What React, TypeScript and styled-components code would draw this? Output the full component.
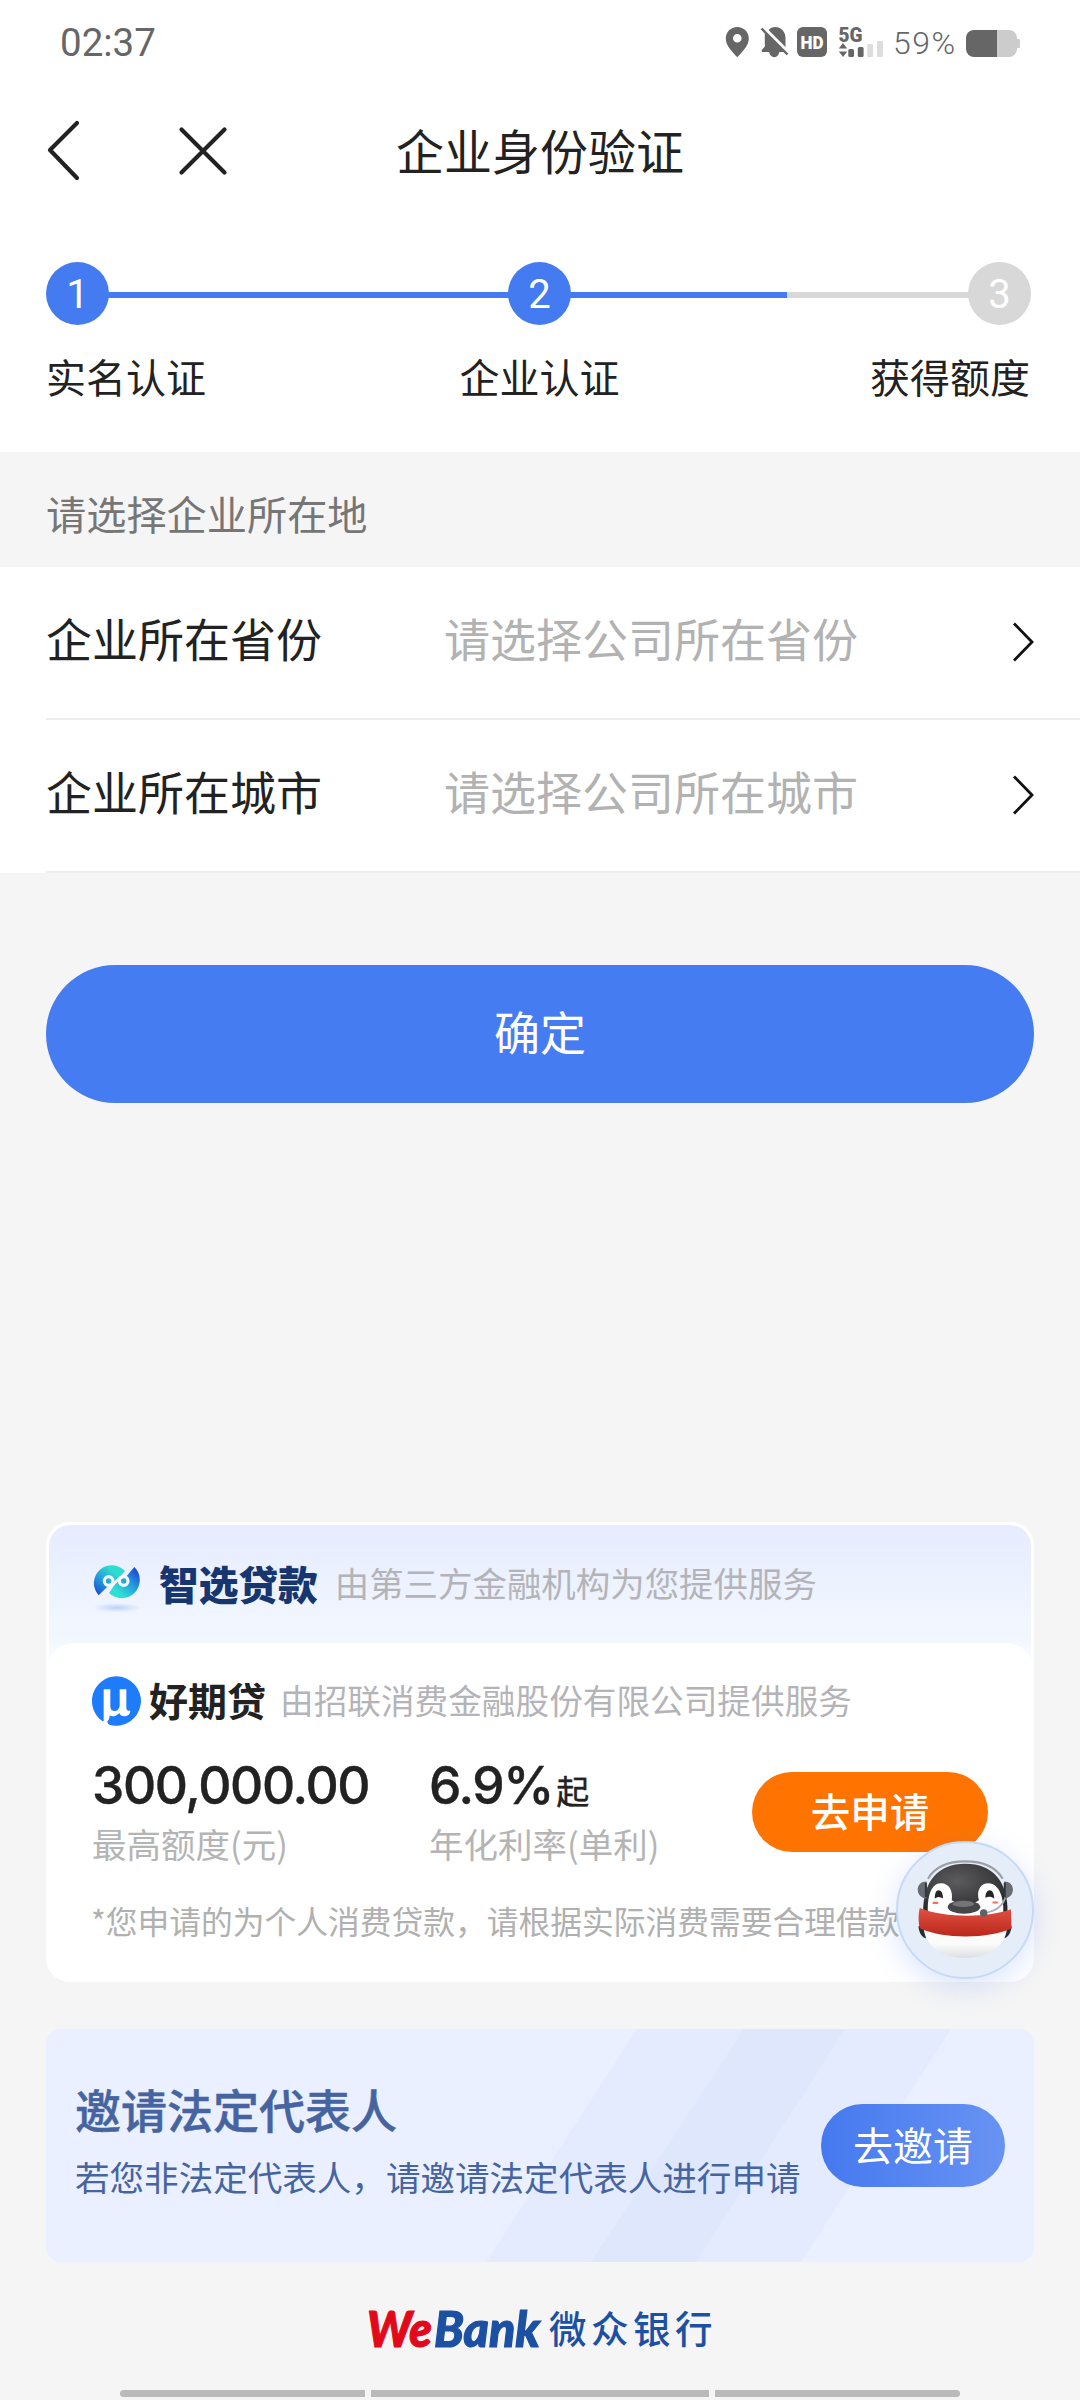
import React from 'react';
import styled, { createGlobalStyle, css } from 'styled-components';

const GlobalStyle = createGlobalStyle`
  * {
    box-sizing: border-box;
  }
  body {
    margin: 0;
    background: #f5f5f5;
    color: #222222;
    font-family: Roboto, 'Noto Sans CJK SC', sans-serif;
  }
  button {
    border: none;
    padding: 0;
    font-family: inherit;
    color: inherit;
    background: none;
  }
  svg {
    display: block;
    flex: none;
  }
`;

interface IStep {
  no: number;
  label: string;
  done: boolean;
}

interface IFieldProps {
  label: string;
  placeholder: string;
}

const steps: IStep[] = [
  { no: 1, label: '实名认证', done: true },
  { no: 2, label: '企业认证', done: true },
  { no: 3, label: '获得额度', done: false },
];

const fields: IFieldProps[] = [
  { label: '企业所在省份', placeholder: '请选择公司所在省份' },
  { label: '企业所在城市', placeholder: '请选择公司所在城市' },
];

const StatusIcons = () => (
  <svg width="162" height="66" viewBox="724 10 162 66" fill="#666666">
    <path
      fillRule="evenodd"
      d="M737.3 27c6.5 0 11.5 5 11.5 11.4 0 7.2-6.5 13.2-11.5 18.8-5-5.600-11.500-11.600-11.500-18.800 0-6.400 5-11.400 11.500-11.400zm0 7a4.300 4.300 0 1 0 0 8.600 4.300 4.300 0 0 0 0-8.600z"
    />
    <path d="M768.500 30c1.800-2 4-3 6.500-3 6 0 10.500 4.600 10.500 10.700v9.300zM764.800 32l20 20h-5.300c-.8 3-2.500 5.200-5.200 5.200s-4.600-2.200-5.200-5.200h-7.300v-2l3-3.600z" />
    <path d="M761.500 28.500l26 26" stroke="#666666" strokeWidth="2.400" />
    <rect x="797" y="27" width="30" height="30" rx="6" />
    <text x="812" y="49" fill="#fff" fontSize="18.500" fontWeight="900" textAnchor="middle" textLength="23" lengthAdjust="spacingAndGlyphs">
      HD
    </text>
    <text x="838.500" y="41.500" fontSize="20" fontWeight="900" textLength="24" lengthAdjust="spacingAndGlyphs">
      5G
    </text>
    <path d="M843 43l4.200 5.500h-8.400zM843 57l4.200-5.500h-8.400z" />
    <rect x="848.300" y="49" width="5.700" height="8" rx="1.500" />
    <rect x="857.800" y="47" width="5.800" height="10" rx="1.500" />
    <g fill="#dddddd">
      <rect x="867.300" y="44" width="5.800" height="13" rx="1" />
      <rect x="877" y="41" width="6" height="16" rx="1" />
    </g>
  </svg>
);

const Battery = () => (
  <svg width="54" height="27" viewBox="0 0 54 27">
    <path d="M8 0h35a8 8 0 0 1 8 8v11a8 8 0 0 1-8 8H31V0z" fill="#cccccc" />
    <rect x="50" y="9" width="4" height="9" rx="1.500" fill="#cccccc" />
    <path d="M8 0h23v27H8a8 8 0 0 1-8-8V8a8 8 0 0 1 8-8z" fill="#666666" />
  </svg>
);

const BackIcon = () => (
  <svg width="34" height="62" viewBox="0 0 34 62" fill="none" stroke="#222222" strokeWidth="4.200" strokeLinecap="round">
    <path d="M31 3L4 30l27 28" strokeLinejoin="round" />
  </svg>
);

const CloseIcon = () => (
  <svg width="50" height="50" viewBox="0 0 50 50" fill="none" stroke="#222222" strokeWidth="4.200" strokeLinecap="round">
    <path d="M3.500 3.500l43 43M46.500 3.500l-43 43" />
  </svg>
);

const ArrowIcon = () => (
  <svg width="22" height="40" viewBox="0 0 22 40" fill="none" stroke="#111111" strokeWidth="2.800">
    <path d="M2 1.500L20 20 2 38.500" />
  </svg>
);

const LoanLogo = () => (
  <svg width="52" height="52" viewBox="0 0 156 156">
    <defs>
      <linearGradient id="loanA" x1="0" y1="1" x2="0.900" y2="0">
        <stop offset="0.050" stopColor="#1c49d6" />
        <stop offset="0.350" stopColor="#2090dc" />
        <stop offset="0.750" stopColor="#2fdcd0" />
      </linearGradient>
      <linearGradient id="loanB" x1="0" y1="1" x2="0.900" y2="0">
        <stop offset="0.250" stopColor="#30dfd6" />
        <stop offset="0.600" stopColor="#22a0dc" />
        <stop offset="0.950" stopColor="#1f48d6" />
      </linearGradient>
      <radialGradient id="loanShadow">
        <stop offset="0" stopColor="#bcd0fb" />
        <stop offset="1" stopColor="#bcd0fb" stopOpacity="0" />
      </radialGradient>
    </defs>
    <ellipse cx="78" cy="134" rx="72" ry="14" fill="url(#loanShadow)" />
    <path d="M23 97A51 51 0 1 1 102 24L74 56 46 74z" fill="url(#loanA)" />
    <path d="M130 12A51 51 0 1 1 54 90L76 58 108 38z" fill="url(#loanB)" />
    <g fill="none" stroke="#f4f9ff" strokeWidth="9.500">
      <circle cx="53" cy="54" r="13" />
      <circle cx="98" cy="54" r="13" />
      <path d="M62 68L90 41" strokeWidth="8" />
    </g>
  </svg>
);

const MuLogo = () => (
  <svg width="50" height="50" viewBox="0 0 150 150">
    <path d="M75 1a74 74 0 1 1-20 145c-5-2-6-8-7-14l-13 4A74 74 0 0 1 75 1z" fill="#1e7bfa" />
    <path
      d="M38 136V40h20v48c0 12 4 17 12 17 10 0 16-8 16-18V40h20v54c0 8 3 12 12 10-1 11-8 17-18 17-8 0-13-4-15-10-6 7-13 10-20 10-4 0-7-1-9-3 0 7-2 13-6 18z"
      fill="#ffffff"
    />
  </svg>
);

const Penguin = () => (
  <svg width="96" height="102" viewBox="114 132 282 300">
    <defs>
      <radialGradient id="head" cx="0.400" cy="0.350" r="0.700">
        <stop offset="0" stopColor="#5c5c5e" />
        <stop offset="1" stopColor="#29292b" />
      </radialGradient>
      <linearGradient id="scarf" x1="0" y1="0" x2="0" y2="1">
        <stop offset="0" stopColor="#e25043" />
        <stop offset="1" stopColor="#b9281b" />
      </linearGradient>
      <linearGradient id="belly" x1="0" y1="0" x2="0" y2="1">
        <stop offset="0.500" stopColor="#fbfbfa" />
        <stop offset="1" stopColor="#dcdfe2" />
      </linearGradient>
    </defs>
    <path d="M118 330l22-4v40c-12-4-20-16-22-36zM392 330l-22-4v40c12-4 20-16 22-36z" fill="#2b2c30" />
    <path d="M134 340h244c-6 50-56 83-122 83s-116-33-122-83z" fill="url(#belly)" />
    <path d="M132 290c-2-92 44-144 124-144s126 52 124 144z" fill="url(#head)" />
    <path d="M146 190c20-34 58-51 110-51s90 17 110 51" fill="none" stroke="#9b9fa5" strokeWidth="6" />
    <path d="M146 290c-2-50 10-87 38-87 26 0 36 24 32 50l40 24 40-24c-8-28 4-50 28-50 32 0 48 46 43 95-60 14-160 14-221-8z" fill="#ffffff" />
    <path d="M166 248c0-14 4-24 11-24 8 0 14 10 13 24-8-6-16-6-24 0zM315 246c0-14 6-22 13-22s13 10 13 24c-8-6-18-7-26-2z" fill="#252527" />
    <path d="M160 261h16M336 260h16" stroke="#f26f59" strokeWidth="6" />
    <ellipse cx="252" cy="273" rx="48" ry="20" fill="#454648" />
    <ellipse cx="250" cy="264" rx="32" ry="9" fill="#737477" />
    <path d="M122 276c70 29 200 30 268 4l2 56c-62 31-202 33-270 0-4-16-5-42 0-60z" fill="url(#scarf)" />
    <path d="M375 240c-6 28-28 44-58 50" fill="none" stroke="#a9afb6" strokeWidth="5" />
    <circle cx="310" cy="291" r="11" fill="#5f6267" />
    <path d="M142 198c-16 0-26 10-26 24s10 26 26 26zM370 198c16 0 26 10 26 24s-10 26-26 26z" fill="#686c73" />
    <path d="M140 202v42M372 202v42" stroke="#33363b" strokeWidth="6" />
  </svg>
);

const BankLogo = () => (
  <svg width="360" height="90" viewBox="360 2283 360 90">
    <g fontFamily="Lato, 'Noto Sans', sans-serif" fontWeight="900" fontStyle="italic" fontSize="49" strokeWidth="1.200">
      <text x="367" y="2346.500" fill="#e20a1a" stroke="#e20a1a" textLength="65" lengthAdjust="spacingAndGlyphs">
        We
      </text>
      <text x="434" y="2346.500" fill="#1c50a2" stroke="#1c50a2" textLength="106" lengthAdjust="spacingAndGlyphs">
        Bank
      </text>
    </g>
    <text x="549" y="2343" fill="#1c50a2" fontFamily="'Noto Sans CJK SC', sans-serif" fontWeight="500" fontSize="37.500" letterSpacing="4.500">
      微众银行
    </text>
  </svg>
);

const App = () => {
  return (
    <Screen>
      <GlobalStyle />
      <StatusBar>
        <Clock>02:37</Clock>
        <StatusIcons />
        <Percent>59%</Percent>
        <Battery />
      </StatusBar>
      <NavBar>
        <NavButtons>
          <button>
            <BackIcon />
          </button>
          <button>
            <CloseIcon />
          </button>
        </NavButtons>
        <NavTitle>企业身份验证</NavTitle>
      </NavBar>
      <Steps>
        <StepTrack>
          {steps.map(step => (
            <React.Fragment key={step.no}>
              {step.no > 1 && <StepLine done={step.no === 2} />}
              <StepDot done={step.done}>{step.no}</StepDot>
            </React.Fragment>
          ))}
        </StepTrack>
        <StepLabels>
          {steps.map(step => (
            <span key={step.no}>{step.label}</span>
          ))}
        </StepLabels>
      </Steps>
      <SectionTitle>请选择企业所在地</SectionTitle>
      <FieldList>
        {fields.map(field => (
          <Field key={field.label}>
            <FieldLabel>{field.label}</FieldLabel>
            <FieldValue>{field.placeholder}</FieldValue>
            <ArrowIcon />
          </Field>
        ))}
      </FieldList>
      <SubmitButton>确定</SubmitButton>

      <LoanCard>
        <LoanHeader>
          <LoanLogo />
          <LoanTitle>智选贷款</LoanTitle>
          <Provider size={34.45}>由第三方金融机构为您提供服务</Provider>
        </LoanHeader>
        <LoanBody>
          <Brand>
            <MuLogo />
            <BrandName>好期贷</BrandName>
            <Provider size={33.65}>由招联消费金融股份有限公司提供服务</Provider>
          </Brand>
          <Offer>
            <Figure width={337}>
              <Amount>300,000.00</Amount>
              <Caption>最高额度(元)</Caption>
            </Figure>
            <Figure width={322}>
              <Amount>
                6.9%<small>起</small>
              </Amount>
              <Caption>年化利率(单利)</Caption>
            </Figure>
            <ApplyButton>去申请</ApplyButton>
          </Offer>
          <Notice>*您申请的为个人消费贷款，请根据实际消费需要合理借款</Notice>
        </LoanBody>
        <ServiceButton>
          <Penguin />
        </ServiceButton>
      </LoanCard>

      <InviteCard>
        <InviteStripes width="988" height="233" viewBox="46 2029 988 233" fill="#d3dffd" fillOpacity="0.280">
          <path d="M637 2029h208L696 2262H486z" />
          <path d="M744 2029h207L801 2262H591z" />
        </InviteStripes>
        <InviteText>
          <h3>邀请法定代表人</h3>
          <p>若您非法定代表人，请邀请法定代表人进行申请</p>
        </InviteText>
        <InviteButton>去邀请</InviteButton>
      </InviteCard>
      <Footer>
        <BankLogo />
      </Footer>
      <GestureBar>
        <i />
        <i />
        <i />
      </GestureBar>
    </Screen>
  );
};

const Screen = styled.div`
  width: 1080px;
  height: 2400px;
  display: flex;
  flex-direction: column;
  overflow: hidden;
  background: #f5f5f5;
`;

const StatusBar = styled.div`
  height: 86px;
  padding: 0 60px;
  display: flex;
  align-items: center;
  background: #ffffff;
  color: #666666;
`;

const Clock = styled.span`
  flex: 1;
  font-size: 38.5px;
  line-height: 44px;
`;

const Percent = styled.span`
  width: 73px;
  margin-left: 7px;
  font-size: 32px;
  font-weight: 300;
  letter-spacing: 1.5px;
  white-space: nowrap;
`;

const NavBar = styled.div`
  height: 130px;
  padding: 0 46px;
  display: grid;
  grid-template-columns: 1fr auto 1fr;
  align-items: center;
  background: #ffffff;
`;

const NavButtons = styled.div`
  display: flex;
  align-items: center;
  gap: 98px;
`;

const NavTitle = styled.h1`
  margin: 0;
  padding-top: 6px;
  font-size: 48px;
  line-height: 60px;
  font-weight: 400;
`;

const Steps = styled.div`
  height: 236px;
  padding: 46px 49px 0 46px;
  background: #ffffff;
`;

const StepTrack = styled.div`
  display: flex;
  align-items: center;
`;

const StepDot = styled.div<{ done: boolean }>`
  width: 63px;
  height: 63px;
  padding-top: 1px;
  border-radius: 50%;
  background: ${({ done }) => (done ? '#457bf0' : '#d8d8d8')};
  color: #ffffff;
  font-size: 40px;
  line-height: 63px;
  text-align: center;
`;

const StepLine = styled.div<{ done: boolean }>`
  flex: ${({ done }) => (done ? 401 : 399)};
  height: 6px;
  margin: 3px -1px 0;
  background: ${({ done }) => (done ? '#457bf0' : 'linear-gradient(to right, #457bf0 54.3%, #d8d8d8 54.3%)')};
`;

const StepLabels = styled.div`
  margin-top: 26px;
  padding-right: 1px;
  display: flex;
  justify-content: space-between;
  font-size: 40px;
  line-height: 58px;
  span:nth-child(2) {
    margin-left: 3px;
  }
`;

const SectionTitle = styled.div`
  height: 115px;
  padding: 6px 46px 0;
  display: flex;
  align-items: center;
  color: #767676;
  font-size: 40.2px;
`;

const FieldList = styled.div`
  padding-left: 46px;
  background: #ffffff;
`;

const Field = styled.div`
  height: 153px;
  padding-right: 46px;
  display: flex;
  align-items: center;
  border-bottom: 2px solid #ededed;
  font-size: 46px;
  line-height: 60px;
  svg {
    margin-top: -2px;
  }
`;

const FieldLabel = styled.span`
  width: 398px;
  margin-top: -3px;
`;

const FieldValue = styled.span`
  flex: 1;
  margin-top: -3px;
  color: #b2b2b2;
`;

const pill = css`
  display: flex;
  align-items: center;
  justify-content: center;
  border-radius: 70px;
  color: #ffffff;
`;

const SubmitButton = styled.button`
  ${pill}
  height: 138px;
  margin: 92px 46px 0;
  padding-bottom: 8px;
  background: #467cf1;
  color: #ffffff;
  font-size: 46px;
`;

const LoanCard = styled.div`
  position: relative;
  height: 460px;
  margin: 419px 46px 0;
  border: 3px solid #ffffff;
  border-radius: 24px;
  background: linear-gradient(to bottom, #e6ecfe 0, #f3f8ff 118px, #ffffff 142px);
`;

const LoanHeader = styled.div`
  height: 118px;
  padding: 0 0 4px 42px;
  display: flex;
  align-items: center;
  svg {
    margin-top: 14px;
  }
`;

const LoanTitle = styled.span`
  margin: 0 17px 0 16px;
  font-size: 39.7px;
  font-weight: 900;
  color: #17366f;
`;

const Provider = styled.span<{ size: number }>`
  font-size: ${({ size }) => size}px;
  color: #b4b4b8;
  white-space: nowrap;
`;

const LoanBody = styled.div`
  height: 336px;
  padding: 27px 0 0 43px;
  border-radius: 24px;
  background: #ffffff;
`;

const Brand = styled.div`
  height: 62px;
  margin-left: -1px;
  padding-bottom: 3px;
  display: flex;
  align-items: center;
  svg {
    margin-top: 2px;
  }
`;

const BrandName = styled.span`
  margin: -2px 14px 0 8px;
  font-size: 39px;
  font-weight: 700;
`;

const Offer = styled.div`
  height: 158px;
  padding-top: 2px;
  display: flex;
  align-items: center;
`;

const Figure = styled.div<{ width: number }>`
  width: ${({ width }) => width}px;
`;

const Amount = styled.div`
  height: 62px;
  font-family: Inter, 'Noto Sans CJK SC', sans-serif;
  font-size: 51.5px;
  line-height: 64px;
  font-weight: 500;
  letter-spacing: -1.35px;
  white-space: nowrap;
  -webkit-text-stroke: 0.4px #222222;
  small {
    margin-left: 3px;
    font-size: 33px;
    font-weight: 400;
  }
`;

const Caption = styled.div`
  font-family: 'Noto Sans CJK SC', sans-serif;
  font-size: 34.5px;
  line-height: 56px;
  color: #b4b4b4;
`;

const ApplyButton = styled.button`
  ${pill}
  width: 236px;
  height: 80px;
  margin-left: 1px;
  padding-bottom: 5px;
  background: #ff7300;
  color: #ffffff;
  font-size: 39.5px;
  font-weight: 500;
`;

const Notice = styled.div`
  margin: 6px 0 0 -1px;
  font-family: 'Noto Sans CJK SC', sans-serif;
  font-size: 31.75px;
  line-height: 48px;
  color: #b0b0b0;
  white-space: nowrap;
`;

const ServiceButton = styled.button`
  position: absolute;
  right: -3px;
  bottom: 0;
  width: 138px;
  height: 138px;
  display: flex;
  align-items: center;
  justify-content: center;
  border: 2px solid #c4daf9;
  border-radius: 50%;
  background: #e5edf9;
  box-shadow: 0 8px 30px rgba(70, 120, 240, 0.2);
`;

const InviteCard = styled.div`
  position: relative;
  height: 233px;
  margin: 47px 46px 0;
  padding: 0 29px;
  display: flex;
  align-items: center;
  justify-content: space-between;
  border-radius: 15px;
  overflow: hidden;
  background: #eaf0ff;
`;

const InviteStripes = styled.svg`
  position: absolute;
  left: 0;
  top: 0;
`;

const InviteText = styled.div`
  position: relative;
  color: #4664a0;
  white-space: nowrap;
  h3 {
    margin: 0;
    font-size: 46px;
    line-height: 68px;
    font-weight: 500;
    -webkit-text-stroke: 0.5px #4664a0;
  }
  p {
    margin: 0;
    font-size: 34.55px;
    line-height: 67px;
  }
`;

const InviteButton = styled.button`
  ${pill}
  position: relative;
  width: 184px;
  height: 83px;
  padding-bottom: 3px;
  background: linear-gradient(to right, #4579ef, #6893f3);
  color: #ffffff;
  font-size: 40px;
`;

const Footer = styled.div`
  height: 128px;
  display: flex;
  justify-content: center;
  padding-top: 21px;
`;

const GestureBar = styled.div`
  height: 7px;
  margin: 0 120px;
  display: grid;
  grid-template-columns: 245px 338px 245px;
  gap: 6px;
  i {
    background: #bababa;
  }
  i:first-child {
    border-radius: 4px 0 0 4px;
  }
  i:last-child {
    border-radius: 0 4px 4px 0;
  }
`;

export default App;
